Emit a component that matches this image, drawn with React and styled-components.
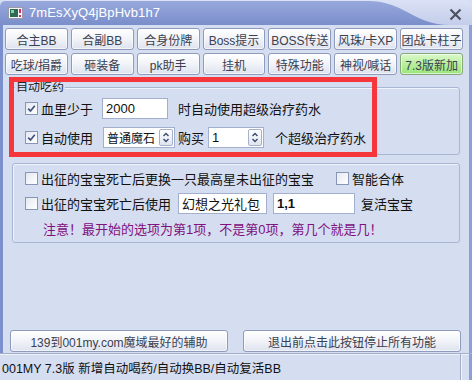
import React from "react";
import styled, { createGlobalStyle } from "styled-components";

const BG = "#d5ddf0";

const GlobalStyle = createGlobalStyle`
  html, body { margin: 0; padding: 0; }
  body {
    background: ${BG};
    font-family: "Liberation Sans", "Noto Sans CJK SC", sans-serif;
    color: #111;
  }
`;

const Window = styled.div`
  width: 472px;
  height: 380px;
  display: flex;
  flex-direction: column;
  position: relative;
  overflow: hidden;
  background: ${BG};
  border-radius: 6px 6px 0 0;
`;

const TitleBar = styled.div`
  height: 25px;
  flex-shrink: 0;
  position: relative;
  display: flex;
  align-items: center;
  padding-left: 8px;
  background: linear-gradient(#dbe2f5, #c3cdea);
  svg.bg {
    position: absolute;
    left: 0;
    top: 0;
    z-index: 0;
  }
`;

const Title = styled.span`
  position: relative;
  z-index: 1;
  margin-left: 6px;
  font-size: 13px;
  color: #ffffff;
  letter-spacing: 0.1px;
`;

const AppIcon = styled.svg`
  position: relative;
  z-index: 1;
`;

const CloseIcon = styled.svg`
  position: relative;
  z-index: 1;
  margin-left: auto;
  margin-right: 10px;
  margin-top: 4px;
`;

const Body = styled.div`
  flex: 1;
  display: flex;
  flex-direction: column;
  padding: 3px 6px 0 2px;
  border-left: 3px solid #7b8fcc;
  border-right: 3px solid #8d9fd5;
`;

const ButtonGrid = styled.div`
  display: grid;
  grid-template-columns: repeat(7, 1fr);
  grid-auto-rows: 22px;
  column-gap: 3px;
  row-gap: 3px;
`;

const Btn = styled.button`
  margin: 0;
  padding: 0;
  font-family: inherit;
  font-size: 12px;
  color: #3a4050;
  border: 1px solid ${(p) => (p.$green ? "#86a77a" : "#8e9bba")};
  border-radius: 3px;
  white-space: nowrap;
  overflow: hidden;
  background: ${(p) =>
    p.$green
      ? "linear-gradient(#dcf8cc, #b4ee98 55%, #9de47e)"
      : "linear-gradient(#ffffff, #f1f3f8 50%, #dde2ee)"};
  box-shadow: inset 0 0 0 1px rgba(255, 255, 255, 0.6);
`;

const Group = styled.div`
  position: relative;
  margin: ${(p) => p.$mt}px 3px 0 7px;
  padding: ${(p) => p.$pt}px 0 ${(p) => p.$pb}px 12px;
  border: 1px solid #a8b5d3;
  border-radius: 3px;
  box-shadow: inset 1px 1px 0 #eef2fb;
  display: flex;
  flex-direction: column;
  gap: ${(p) => p.$gap}px;
`;

const GroupLabel = styled.span`
  position: absolute;
  top: -7px;
  left: 2px;
  padding: 0 1px;
  background: ${BG};
  font-size: 12px;
  line-height: 13px;
  color: #222;
`;

const Row = styled.div`
  display: flex;
  align-items: center;
  height: ${(p) => p.$h || 21}px;
  font-size: 13px;
  white-space: nowrap;
`;

const Check = styled.span`
  width: 11px;
  height: 11px;
  flex-shrink: 0;
  border: 1px solid #8896b6;
  background: linear-gradient(135deg, #e4e8f1, #ffffff);
  display: flex;
  align-items: center;
  justify-content: center;
  margin-right: 3px;
  margin-left: ${(p) => p.$ml || 0}px;
`;

const Label = styled.span`
  margin-left: ${(p) => p.$ml || 0}px;
  color: ${(p) => p.$color || "#111"};
`;

const Field = styled.div`
  width: ${(p) => p.$w}px;
  height: 21px;
  margin-left: ${(p) => p.$ml || 0}px;
  box-sizing: border-box;
  background: #ffffff;
  border: 1px solid #a2b0cd;
  display: flex;
  align-items: center;
  padding-left: 3px;
  font-size: ${(p) => p.$fs || 13}px;
  font-weight: ${(p) => (p.$bold ? 700 : 400)};
`;

const FieldText = styled.span`
  flex: 1;
`;

const SideBtn = styled.span`
  width: 14px;
  height: 17px;
  margin-right: 1px;
  box-sizing: border-box;
  border: 1px solid #a6b2cc;
  border-radius: 2px;
  background: linear-gradient(#ffffff, #dfe4ef);
  display: flex;
  align-items: center;
  justify-content: center;
`;

const Note = styled.div`
  height: 20px;
  display: flex;
  align-items: center;
  margin-left: 18px;
  font-size: 13px;
  color: #82107e;
  white-space: nowrap;
`;

const Spacer = styled.div`
  flex: 1;
`;

const BottomRow = styled.div`
  display: flex;
  gap: 15px;
  margin: 0 2px 1px 5px;
  height: 22px;
`;

const WideBtn = styled(Btn)`
  flex: 1;
`;

const StatusBar = styled.div`
  height: 26px;
  flex-shrink: 0;
  display: flex;
  border-top: 1px solid #a3afcb;
  box-shadow: inset 0 1px 0 #eef2fb;
`;

const StatusPane = styled.div`
  flex: 1;
  display: flex;
  align-items: center;
  padding-left: 2px;
  font-size: 12.5px;
  color: #111;
  border-right: 1px solid #a0abc6;
  white-space: nowrap;
`;

const StatusGrip = styled.div`
  width: 7px;
  border-left: 1px solid #f2f5fb;
  border-right: 3px solid #8d9fd5;
`;

const Highlight = styled.div`
  position: absolute;
  left: 9px;
  top: 77px;
  width: 368px;
  height: 80px;
  box-sizing: border-box;
  border: 5px solid #f5363a;
  pointer-events: none;
`;

const CheckMark = () => (
  <svg width="9" height="9" viewBox="0 0 9 9">
    <polyline
      points="1.2,4.6 3.5,7 7.8,1.8"
      fill="none"
      stroke="#43507c"
      strokeWidth="1.7"
    />
  </svg>
);

const UpDown = () => (
  <svg width="8" height="11" viewBox="0 0 8 11">
    <polyline points="1.5,4 4,1.5 6.5,4" fill="none" stroke="#3c4a70" strokeWidth="1.4" />
    <polyline points="1.5,7 4,9.5 6.5,7" fill="none" stroke="#3c4a70" strokeWidth="1.4" />
  </svg>
);

const topButtons = [
  "合主BB",
  "合副BB",
  "合身份牌",
  "Boss提示",
  "BOSS传送",
  "风珠/卡XP",
  "团战卡柱子",
  "吃球/捐爵",
  "砸装备",
  "pk助手",
  "挂机",
  "特殊功能",
  "神视/喊话",
  "7.3版新加",
];

export default function App() {
  return (
    <>
      <GlobalStyle />
      <Window>
        <TitleBar>
          <svg className="bg" width="472" height="25" viewBox="0 0 472 25">
            <defs>
              <linearGradient id="tb" x1="0" y1="0" x2="0" y2="1">
                <stop offset="0" stopColor="#97a8dc" />
                <stop offset="1" stopColor="#7a8ecb" />
              </linearGradient>
            </defs>
            <path d="M0,6 Q0,1 6,1 H368 C404,1 414,25 450,25 H0 Z" fill="url(#tb)" />
          </svg>
          <AppIcon width="15" height="12" viewBox="0 0 15 12">
            <rect x="0.5" y="0.5" width="14" height="11" fill="#f4f4f4" stroke="#9a9aa8" />
            <rect x="2" y="2" width="8" height="8" fill="#2f6a55" />
            <rect x="3" y="3" width="3" height="3" fill="#8fd0a8" />
            <rect x="11" y="2" width="2" height="4" fill="#d0306a" />
            <rect x="11" y="8" width="2" height="2" fill="#d0306a" />
          </AppIcon>
          <Title>7mEsXyQ4jBpHvb1h7</Title>
          <CloseIcon width="13" height="13" viewBox="0 0 13 13">
            <path d="M1.5,1.5 L11.5,11.5 M11.5,1.5 L1.5,11.5" stroke="#4f5262" strokeWidth="2.2" />
          </CloseIcon>
        </TitleBar>
        <Body>
          <ButtonGrid>
            {topButtons.map((t, i) => (
              <Btn key={t} $green={i === 13}>
                {t}
              </Btn>
            ))}
          </ButtonGrid>

          <Group $mt={12} $pt={10} $pb={6} $gap={8}>
            <GroupLabel>自动吃药</GroupLabel>
            <Row>
              <Check>
                <CheckMark />
              </Check>
              <Label>血里少于</Label>
              <Field $w={66} $ml={9}>
                <FieldText>2000</FieldText>
              </Field>
              <Label $ml={10}>时自动使用超级治疗药水</Label>
            </Row>
            <Row>
              <Check>
                <CheckMark />
              </Check>
              <Label>自动使用</Label>
              <Field $w={72} $ml={10} $fs={12}>
                <FieldText>普通魔石</FieldText>
                <SideBtn>
                  <UpDown />
                </SideBtn>
              </Field>
              <Label $ml={3}>购买</Label>
              <Field $w={56} $ml={4}>
                <FieldText>1</FieldText>
                <SideBtn>
                  <UpDown />
                </SideBtn>
              </Field>
              <Label $ml={11}>个超级治疗药水</Label>
            </Row>
          </Group>

          <Group $mt={8} $pt={4} $pb={4} $gap={5}>
            <Row $h={20}>
              <Check />
              <Label>出征的宝宝死亡后更换一只最高星未出征的宝宝</Label>
              <Check $ml={22} />
              <Label>智能合体</Label>
            </Row>
            <Row $h={20}>
              <Check />
              <Label>出征的宝宝死亡后使用</Label>
              <Field $w={89} $ml={7}>
                <FieldText>幻想之光礼包</FieldText>
              </Field>
              <Field $w={82} $ml={6} $bold>
                <FieldText>1,1</FieldText>
              </Field>
              <Label $ml={6}>复活宝宝</Label>
            </Row>
            <Note>注意！最开始的选项为第1项，不是第0项，第几个就是几！</Note>
          </Group>

          <Spacer />

          <BottomRow>
            <WideBtn>139到001my.com魔域最好的辅助</WideBtn>
            <WideBtn>退出前点击此按钮停止所有功能</WideBtn>
          </BottomRow>
        </Body>
        <StatusBar>
          <StatusPane>001MY 7.3版 新增自动喝药/自动换BB/自动复活BB</StatusPane>
          <StatusGrip />
        </StatusBar>
        <Highlight />
      </Window>
    </>
  );
}
